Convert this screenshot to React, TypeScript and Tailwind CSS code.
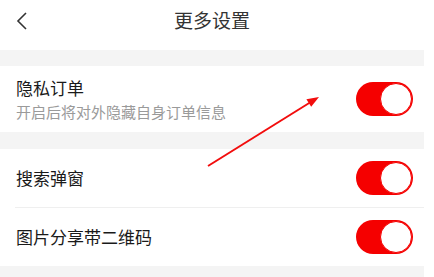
import React from 'react';

// ─── Toggle ──────────────────────────────────────────────────────────────────

function Toggle() {
  return (
    <div className="relative w-[57px] h-[34px] rounded-full bg-[#f50000] shrink-0">
      <div className="absolute right-[1px] top-[1px] w-[32px] h-[32px] rounded-full bg-white border border-[#f50000]" />
    </div>
  );
}

// ─── Row ─────────────────────────────────────────────────────────────────────

function Row({ title, desc, h }: { title: string; desc?: string; h: string }) {
  return (
    <div className={`flex items-center justify-between pl-4 pr-[11px] bg-white ${h}`}>
      <div className="flex flex-col">
        <span className="text-[17px] leading-[22px] text-[#1a1a1a]">{title}</span>
        {desc && <span className="text-[15px] leading-[20px] mt-[3px] text-[#9a9a9a]">{desc}</span>}
      </div>
      <Toggle />
    </div>
  );
}

export default function App() {
  return (
    <div
      className="relative w-[434px] h-[277px] bg-white overflow-hidden"
      style={{ fontFamily: '"Noto Sans CJK SC", "Noto Sans", sans-serif' }}
    >
      <div className="w-[424px] h-full flex flex-col bg-[#f4f4f4]">
        {/* Header */}
        <div className="relative h-[50px] bg-white flex items-start justify-center pt-[6px]">
          <svg className="absolute left-[14px] top-[11px]" width="16" height="20" viewBox="0 0 16 20">
            <path d="M12 2 L4 10 L12 18" fill="none" stroke="#333" strokeWidth="1.6" />
          </svg>
          <span className="text-[19px] leading-[28px] text-[#333]">更多设置</span>
        </div>

        <div className="h-[16px] shrink-0" />
        <Row title="隐私订单" desc="开启后将对外隐藏自身订单信息" h="h-[66px]" />
        <div className="h-[17px] shrink-0" />
        <Row title="搜索弹窗" h="h-[58px]" />
        <div className="bg-white pl-[15px] shrink-0">
          <div className="h-px bg-[#efefef]" />
        </div>
        <Row title="图片分享带二维码" h="h-[58px]" />
      </div>

      {/* Annotation arrow */}
      <svg className="absolute inset-0 pointer-events-none" width="434" height="277">
        <line x1="208" y1="166" x2="310" y2="102.5" stroke="#f20d0d" strokeWidth="2" />
        <polygon points="319,97 311.2,106.8 306.4,99.2" fill="#f20d0d" />
      </svg>
    </div>
  );
}
